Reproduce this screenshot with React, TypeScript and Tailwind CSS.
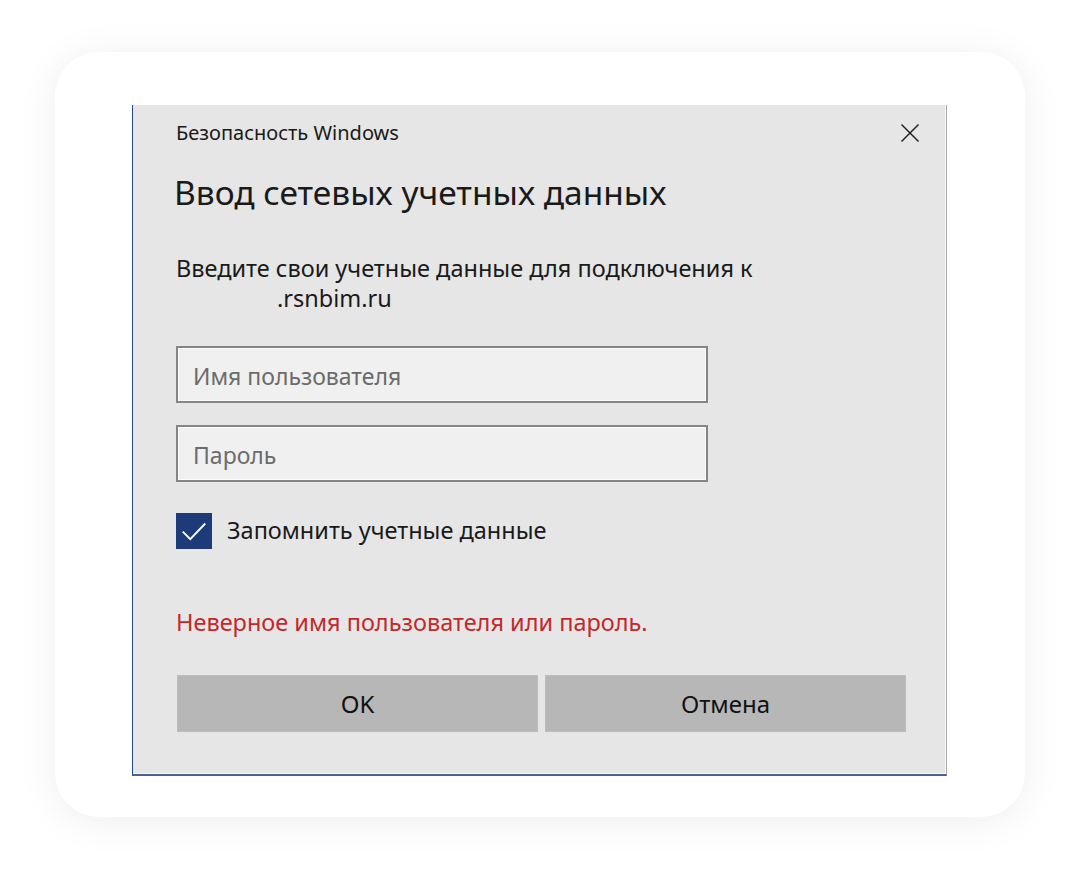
const font = { fontFamily: '"Segoe UI", "Noto Sans", "Open Sans", sans-serif' };

function Field({ placeholder }: { placeholder: string }) {
	return (
		<div className="h-[57px] w-[532px] border-2 border-[#858585] bg-[#f0f0f0] shadow-[inset_0_0_0_1px_#fbfbfb] flex items-center pl-[15px]">
			<span className="text-[23px] text-[#6b6b6b] mt-[4px]">{placeholder}</span>
		</div>
	);
}

export default function App() {
	return (
		<div className="min-h-screen bg-white pt-[52px] pl-[55px]" style={font}>
			<div className="w-[970px] h-[765px] rounded-[44px] bg-white shadow-[0_4px_40px_rgba(0,0,0,0.07)] pt-[53px] pl-[77px]">
				<div className="w-[815px] h-[671px] bg-[#e6e6e6] border-l border-l-[#23468c] border-r border-r-[#a9a9a9] border-b-2 border-b-[#4a6395] shadow-[inset_0_-1px_0_#f7f7f7,inset_-1px_0_0_#f7f7f7] pl-[43px] pr-[26px] text-[#1a1a1a]">
					{/* title bar */}
					<div className="flex items-center justify-between pt-[16px] h-[40px]">
						<div className="text-[20px] leading-[24px]">Безопасность Windows</div>
						<svg viewBox="0 0 20 20" className="w-[20px] h-[20px]" fill="none" stroke="#222" strokeWidth={1.5}>
							<path d="M1.5 1.5 L18.5 18.5 M18.5 1.5 L1.5 18.5" />
						</svg>
					</div>

					<h1 className="mt-[29px] text-[33.5px] leading-[36px] font-normal -ml-[2px]">
						Ввод сетевых учетных данных
					</h1>

					<div className="mt-[43px] text-[23.5px] leading-[30px]">
						<div>Введите свои учетные данные для подключения к</div>
						<div className="pl-[101px]">.rsnbim.ru</div>
					</div>

					<div className="mt-[33px]">
						<Field placeholder="Имя пользователя" />
					</div>
					<div className="mt-[22px]">
						<Field placeholder="Пароль" />
					</div>

					{/* remember checkbox */}
					<div className="mt-[31px] flex items-center gap-[15px] h-[36px]">
						<div className="w-[36px] h-[36px] bg-[#1d3b78] flex items-center justify-center">
							<svg viewBox="0 0 24 24" className="w-[30px] h-[30px]" fill="none" stroke="white" strokeWidth={1.5}>
								<path d="M3 12.5 L9 18.5 L21 6" />
							</svg>
						</div>
						<span className="text-[23.5px]">Запомнить учетные данные</span>
					</div>

					<div className="mt-[58px] text-[23.5px] leading-[30px] text-[#c4282a]">
						Неверное имя пользователя или пароль.
					</div>

					<div className="mt-[38px] flex gap-[7px] pl-px">
						<button className="w-[361px] h-[57px] bg-[#b7b7b7] border border-[#bdbdbd] text-[24px] text-[#111]">
							OK
						</button>
						<button className="w-[361px] h-[57px] bg-[#b7b7b7] border border-[#bdbdbd] text-[24px] text-[#111]">
							Отмена
						</button>
					</div>
				</div>
			</div>
		</div>
	);
}
